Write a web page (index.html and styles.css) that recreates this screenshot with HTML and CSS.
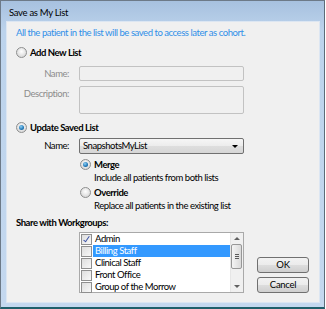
FILE: index.html
```html
<!DOCTYPE html>
<html lang="en">
<head>
    <meta charset="UTF-8">
    <title>Save as My List</title>
    <link rel="stylesheet" href="styles.css">
</head>
<body>
    <div class="window">
        <div class="title-bar">Save as My List</div>
        <div class="content">
            <div class="info">All the patient in the list will be saved to access later as cohort.</div>

            <div class="option first">
                <span class="radio"></span>
                <span class="option-label">Add New List</span>
            </div>
            <div class="field-row name-row">
                <label class="field-label">Name:</label>
                <div class="textbox"></div>
            </div>
            <div class="field-row desc-row">
                <label class="field-label">Description:</label>
                <div class="textbox textarea"></div>
            </div>

            <div class="option second">
                <span class="radio checked"></span>
                <span class="option-label">Update Saved List</span>
            </div>
            <div class="field-row select-row">
                <label class="field-label active">Name:</label>
                <div class="select">
                    <span>SnapshotsMyList</span>
                    <span class="arrow"></span>
                </div>
            </div>
            <div class="sub-options">
                <div class="sub-option">
                    <div class="option">
                        <span class="radio checked"></span>
                        <span class="option-label">Merge</span>
                    </div>
                    <div class="hint">Include all patients from both lists</div>
                </div>
                <div class="sub-option">
                    <div class="option">
                        <span class="radio"></span>
                        <span class="option-label">Override</span>
                    </div>
                    <div class="hint">Replace all patients in the existing list</div>
                </div>
            </div>

            <div class="share-title">Share with Workgroups:</div>
            <div class="bottom">
                <div class="listbox">
                    <div class="items">
                        <div class="item"><span class="check checked"></span><span class="item-text">Admin</span></div>
                        <div class="item selected"><span class="check"></span><span class="item-text">Billing Staff</span></div>
                        <div class="item"><span class="check"></span><span class="item-text">Clinical Staff</span></div>
                        <div class="item"><span class="check"></span><span class="item-text">Front Office</span></div>
                        <div class="item"><span class="check"></span><span class="item-text">Group of the Morrow</span></div>
                    </div>
                    <div class="scrollbar">
                        <span class="scroll-arrow up"></span>
                        <div class="track"><div class="thumb"><span class="grip"></span></div></div>
                        <span class="scroll-arrow down"></span>
                    </div>
                </div>
                <div class="buttons">
                    <button class="btn">OK</button>
                    <button class="btn">Cancel</button>
                </div>
            </div>
        </div>
    </div>
</body>
</html>
```

FILE: styles.css
```css
html, body {
    margin: 0;
    padding: 0;
    background-color: #ffffff;
}
body {
    font-family: Lato, 'Liberation Sans', sans-serif;
    font-size: 9.5px;
    letter-spacing: -0.45px;
    color: #000;
}
.window {
    width: 325px;
    height: 309px;
    border-top: 1px solid #6d7a88;
    border-left: 1px solid #6d7a88;
    border-right: 1px solid #5c6c78;
    border-bottom: 2px solid #1f5f6b;
    background: linear-gradient(to bottom, #a7c1df 0px, #bcd3ec 30px, #c4d8ef 100%);
    display: flex;
    flex-direction: column;
    padding: 0 4px 4px 5px;
    box-sizing: border-box;
}
.title-bar {
    height: 20px;
    line-height: 24px;
    padding-left: 3px;
    font-size: 9.5px;
    letter-spacing: -0.3px;
}
.content {
    flex: 1;
    background-color: #f0f0f0;
    border: 1px solid #dce6f2;
    padding: 4px 9px 0 9px;
}
.info {
    color: #2f8fe8;
    height: 14px;
    line-height: 14px;
    white-space: nowrap;
}
.option {
    display: flex;
    align-items: center;
    height: 14px;
}
.option.first {
    margin-top: 5px;
}
.option.second {
    margin-top: 6px;
}
.radio {
    width: 11px;
    height: 11px;
    border-radius: 50%;
    border: 1px solid #8e8f8f;
    background: radial-gradient(circle at 50% 40%, #ffffff 0%, #dcdcdc 70%, #c8c8c8 100%);
    box-sizing: border-box;
    margin-right: 3px;
    position: relative;
    flex-shrink: 0;
}
.radio.checked::after {
    content: "";
    position: absolute;
    left: 2px;
    top: 2px;
    width: 5px;
    height: 5px;
    border-radius: 50%;
    background: radial-gradient(circle at 40% 35%, #8fd1f5 0%, #1f76b6 60%, #0d4a7c 100%);
}
.option-label {
    font-weight: bold;
}
.field-row {
    display: flex;
    align-items: flex-start;
}
.name-row {
    margin-top: 7px;
}
.desc-row {
    margin-top: 5px;
}
.select-row {
    margin-top: 4px;
}
.field-label {
    width: 53px;
    text-align: right;
    color: #8c8c8c;
    line-height: 15px;
    margin-right: 10px;
}
.field-label.active {
    color: #000;
}
.textbox {
    width: 163px;
    height: 13px;
    border: 1px solid #c2c2c2;
    border-radius: 2px;
    background-color: #f0f0f0;
}
.textbox.textarea {
    height: 26px;
}
.select {
    width: 155px;
    height: 14px;
    border: 1px solid #707070;
    border-radius: 2px;
    background: linear-gradient(to bottom, #f6f6f6 0%, #ececec 50%, #dedede 51%, #d6d6d6 100%);
    display: flex;
    align-items: center;
    justify-content: space-between;
    padding: 0 5px 0 3px;
    line-height: 14px;
}
.select .arrow {
    width: 0;
    height: 0;
    border-left: 3px solid transparent;
    border-right: 3px solid transparent;
    border-top: 3px solid #000;
}
.sub-options {
    margin-left: 64px;
    margin-top: 3px;
}
.sub-option .hint {
    margin-left: 14px;
    height: 13px;
    line-height: 13px;
}
.sub-option + .sub-option {
    margin-top: 1px;
}
.share-title {
    font-weight: bold;
    margin-top: 4px;
    height: 14px;
    line-height: 14px;
}
.bottom {
    display: flex;
    align-items: flex-end;
    margin-top: 2px;
}
.listbox {
    margin-left: 63px;
    width: 163px;
    height: 59px;
    border: 1px solid #a9a9a9;
    background-color: #fff;
    display: flex;
}
.items {
    flex: 1;
    min-width: 0;
}
.item {
    display: flex;
    align-items: center;
    height: 12px;
    line-height: 12px;
    padding-left: 1px;
}
.check {
    width: 11px;
    height: 11px;
    border: 1px solid #8f8f8f;
    background: linear-gradient(to bottom right, #dedede, #f8f8f8);
    box-sizing: border-box;
    margin-right: 1px;
    position: relative;
    flex-shrink: 0;
}
.check.checked::after {
    content: "";
    position: absolute;
    left: 3px;
    top: 0;
    width: 2px;
    height: 6px;
    border-right: 1.5px solid #3b52a6;
    border-bottom: 1.5px solid #3b52a6;
    transform: rotate(35deg);
}
.item-text {
    flex: 1;
    padding-left: 2px;
    white-space: nowrap;
}
.item.selected .item-text {
    background-color: #3399ff;
    color: #fff;
}
.scrollbar {
    width: 12px;
    display: flex;
    flex-direction: column;
    border-left: 1px solid #e6e6e6;
    background-color: #f0f0f0;
}
.scroll-arrow {
    height: 11px;
    width: 12px;
    position: relative;
    flex-shrink: 0;
}
.scroll-arrow::after {
    content: "";
    position: absolute;
    left: 3px;
    top: 4px;
    border-left: 3px solid transparent;
    border-right: 3px solid transparent;
}
.scroll-arrow.up::after {
    border-bottom: 3px solid #606060;
}
.scroll-arrow.down::after {
    border-top: 3px solid #606060;
}
.track {
    flex: 1;
}
.thumb {
    width: 11px;
    height: 25px;
    border: 1px solid #979797;
    border-radius: 2px;
    box-sizing: border-box;
    background: linear-gradient(to right, #f4f4f4, #dadada);
    display: flex;
    align-items: center;
    justify-content: center;
}
.grip {
    width: 4px;
    height: 5px;
    background: repeating-linear-gradient(to bottom, #5a5a5a 0px, #5a5a5a 1px, transparent 1px, transparent 2px);
}
.buttons {
    display: flex;
    flex-direction: column;
    gap: 4px;
    margin-left: 13px;
}
.btn {
    width: 52px;
    height: 16px;
    font-family: Lato, 'Liberation Sans', sans-serif;
    font-size: 9.5px;
    letter-spacing: -0.3px;
    line-height: 14px;
    border: 1px solid #707070;
    border-radius: 3px;
    background: linear-gradient(to bottom, #f2f2f2 0%, #ebebeb 50%, #dddddd 51%, #cfcfcf 100%);
    padding: 0;
    color: #000;
}
```
